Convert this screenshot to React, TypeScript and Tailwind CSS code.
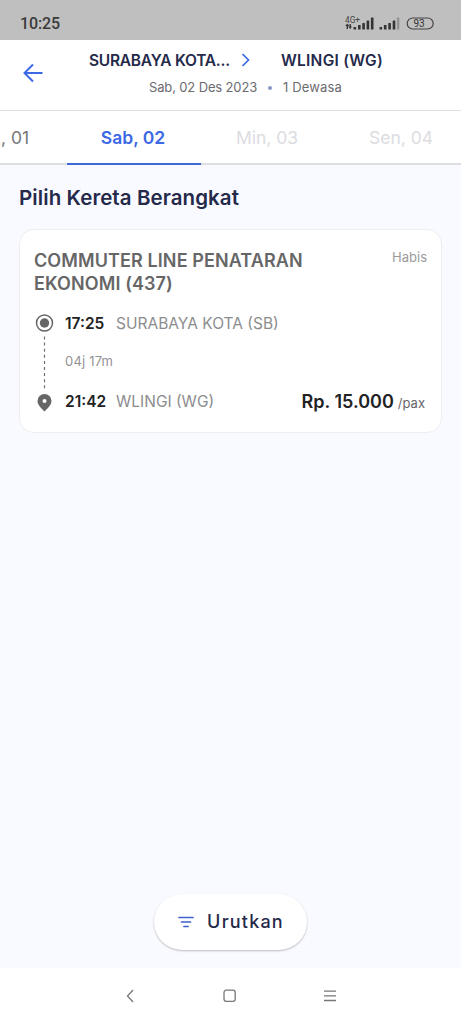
import type { ReactNode } from "react";

interface DateTabProps {
  label: string;
  state: "past" | "active" | "disabled";
  className?: string;
}

const tabStyles = {
  past: "text-[#77777a]",
  active: "font-semibold text-[#3d68e6]",
  disabled: "text-[#dcdce2]",
};

function DateTab({ label, state, className = "w-[134px] justify-center pr-[2px]" }: DateTabProps) {
  return (
    <button
      className={`relative flex h-full shrink-0 items-center pt-[2px] text-[17.5px] whitespace-nowrap ${tabStyles[state]} ${className}`}
    >
      {label}
      {state === "active" && (
        <span className="absolute inset-x-0 -bottom-[2px] h-[2px] bg-[#3d68d8]" />
      )}
    </button>
  );
}

function StatusBar() {
  return (
    <div className="flex h-10 shrink-0 items-center justify-between bg-[#bfbfbf] pt-[7px] pr-[26px] pl-5 text-[#3a3a3a]">
      <span className="font-[Roboto] text-[16px] font-medium tracking-[-0.1px]">10:25</span>
      <svg width="90" height="18" viewBox="0 0 90 18" fill="#333">
        <text x="0" y="7.5" fontSize="8.3" fontFamily="Roboto" fill="#444">4G+</text>
        <path d="M2.3 8.6 4.3 11H3v3H1.6v-3H.3zM5.3 14l-2-2.4h1.2V9h1.4v2.6H7z" />
        <rect x="8.5" y="12" width="2.6" height="2.5" rx=".5" />
        <rect x="13" y="10" width="2.6" height="4.5" rx=".5" />
        <rect x="17.3" y="8" width="2.6" height="6.5" rx=".5" />
        <rect x="21.6" y="5.5" width="2.6" height="9" rx=".5" />
        <rect x="25.9" y="2.5" width="2.6" height="12" rx=".5" />
        <rect x="34.5" y="12" width="2.6" height="2.5" rx=".5" />
        <rect x="38.9" y="10" width="2.6" height="4.5" rx=".5" />
        <rect x="43.3" y="8" width="2.6" height="6.5" rx=".5" />
        <rect x="47.7" y="5.5" width="2.6" height="9" rx=".5" />
        <rect x="51.9" y="2.5" width="2.4" height="12" rx=".5" fill="#929292" />
        <rect x="62.2" y="3" width="26" height="11" rx="5.5" fill="none" stroke="#444" strokeWidth="1.2" />
        <text x="74" y="12.2" fontSize="10" textAnchor="middle" fontFamily="Roboto" fill="#333">93</text>
      </svg>
    </div>
  );
}

function Header() {
  return (
    <header className="flex h-[71px] shrink-0 border-b border-[#e0e0e3] bg-white">
      <button className="flex h-[65px] w-[66px] items-center justify-center" aria-label="Kembali">
        <svg width="22" height="20" viewBox="0 0 22 20" fill="none" stroke="#3d68e6" strokeWidth="2">
          <path d="M20.5 10H2.5M11 1.5 2.5 10l8.5 8.5" />
        </svg>
      </button>
      <div className="w-[330px] pt-[9px] pl-[23px]">
        <div className="flex h-[22px] items-center text-[15.5px] font-semibold text-[#25294a]">
          <span className="w-[152px] pt-px tracking-[-0.25px] whitespace-nowrap">SURABAYA KOTA...</span>
          <svg width="10" height="14" viewBox="0 0 10 14" fill="none" stroke="#3d68e6" strokeWidth="1.7">
            <path d="m1.5 1 6 6-6 6" />
          </svg>
          <span className="ml-[30px] pt-px tracking-[0.25px] whitespace-nowrap">WLINGI (WG)</span>
        </div>
        <div className="mt-[7px] flex h-5 items-center pl-[60px] text-[13px] whitespace-nowrap text-[#6b6b70]">
          <span className="w-[119px] tracking-[-0.14px]">Sab, 02 Des 2023</span>
          <span className="size-1 rounded-full bg-[#8b95c9]" />
          <span className="ml-[11px] tracking-[0.15px]">1 Dewasa</span>
        </div>
      </div>
    </header>
  );
}

function Stop({ time, station, icon }: { time: string; station: string; icon: ReactNode }) {
  return (
    <div className="flex h-5 items-center">
      <span className="flex w-[31px] justify-start">{icon}</span>
      <span className="w-[51px] pt-px text-[15.5px] font-semibold text-[#222225]">{time}</span>
      <span className="pt-px text-[15.5px] whitespace-nowrap text-[#8c8c8e]">{station}</span>
    </div>
  );
}

function TrainCard() {
  return (
    <article className="mt-5 h-[204px] rounded-[15px] border-[1.5px] border-[#eeeef1] bg-white pt-[19px] pr-[14px] pl-[14px]">
      <div className="flex items-start justify-between">
        <h2 className="w-[290px] pt-px text-[18px] leading-[22.5px] font-semibold tracking-[0.1px] text-[#666667]">
          COMMUTER LINE PENATARAN EKONOMI (437)
        </h2>
        <span className="text-[13px] leading-[16px] text-[#9a9a9c]">Habis</span>
      </div>
      <div className="mt-[18px]">
        <Stop
          time="17:25"
          station="SURABAYA KOTA (SB)"
          icon={
            <svg width="21" height="20" viewBox="0 0 21 20" fill="none">
              <circle cx="10.5" cy="10" r="8" stroke="#666" strokeWidth="1.5" />
              <circle cx="10.5" cy="10" r="4.7" fill="#666" />
            </svg>
          }
        />
        <div className="flex h-[57px] items-center">
          <svg width="31" height="57" viewBox="0 0 31 57" fill="none">
            <path d="M10.5 3.5v53.5" stroke="#707070" strokeWidth="1.2" strokeDasharray="3 3.1" />
          </svg>
          <span className="pt-px text-[13px] tracking-[0.2px] text-[#929294]">04j 17m</span>
        </div>
        <div className="flex h-[23px] items-center justify-between pr-[2px]">
          <Stop
            time="21:42"
            station="WLINGI (WG)"
            icon={
              <svg width="21" height="20" viewBox="0 0 21 20" fill="#666">
                <path fillRule="evenodd" d="M10.5 2a7 7 0 0 1 7 7c0 4-4.5 8-7 10.5-2.5-2.5-7-6.500-7-10.500a7 7 0 0 1 7-7Zm0 5a2 2 0 1 0 0 4 2 2 0 0 0 0-4Z" />
              </svg>
            }
          />
          <p className="flex items-baseline gap-1 whitespace-nowrap text-[#222225]">
            <span className="text-[18px] font-semibold">Rp. 15.000</span>
            <span className="text-[13px] text-[#666668]">/pax</span>
          </p>
        </div>
      </div>
    </article>
  );
}

function NavigationBar() {
  return (
    <nav className="flex h-14 shrink-0 items-center justify-center gap-[86px] bg-white pr-px">
      <svg width="14" height="14" viewBox="0 0 14 14" fill="none" stroke="#777" strokeWidth="1.3">
        <path d="M10 1 4.500 7l5.500 6" />
      </svg>
      <svg width="14" height="14" viewBox="0 0 14 14" fill="none" stroke="#777" strokeWidth="1.3">
        <rect x="1" y="1.2" width="11.2" height="11.2" rx="2.3" />
      </svg>
      <svg width="14" height="14" viewBox="0 0 14 14" fill="none" stroke="#777" strokeWidth="1.3">
        <path d="M1 2.200h12M1 6.800h12M1 11.500h12" />
      </svg>
    </nav>
  );
}

export default function App() {
  return (
    <div className="flex h-[1024px] w-[461px] flex-col overflow-hidden bg-[#f9faff] font-[Inter,sans-serif]">
      <StatusBar />
      <Header />
      <div className="flex h-[54px] shrink-0 border-b-2 border-[#dedfe2] bg-white">
        <DateTab label=", 01" state="past" className="w-[67px] justify-start pl-px" />
        <DateTab label="Sab, 02" state="active" />
        <DateTab label="Min, 03" state="disabled" />
        <DateTab label="Sen, 04" state="disabled" />
      </div>
      <main className="flex flex-1 flex-col px-[19px] pt-5 pb-[18px]">
        <h1 className="-mb-px text-[20.5px] leading-[25px] font-semibold tracking-[0.08px] text-[#25294a]">
          Pilih Kereta Berangkat
        </h1>
        <TrainCard />
        <button className="mx-auto mt-auto flex h-[56px] w-[153px] items-center justify-center gap-[13px] rounded-full bg-white pb-px text-[18px] font-medium tracking-[1.2px] text-[#25294a] shadow-[0_1px_2px_rgba(0,0,0,0.25)]">
          <svg className="ml-px" width="16" height="12" viewBox="0 0 16 12" fill="none" stroke="#3d5fd0" strokeWidth="1.7" strokeLinecap="round">
            <path d="M1 1.500h14M3.500 6h9M6 10.500h4" />
          </svg>
          Urutkan
        </button>
      </main>
      <NavigationBar />
    </div>
  );
}
